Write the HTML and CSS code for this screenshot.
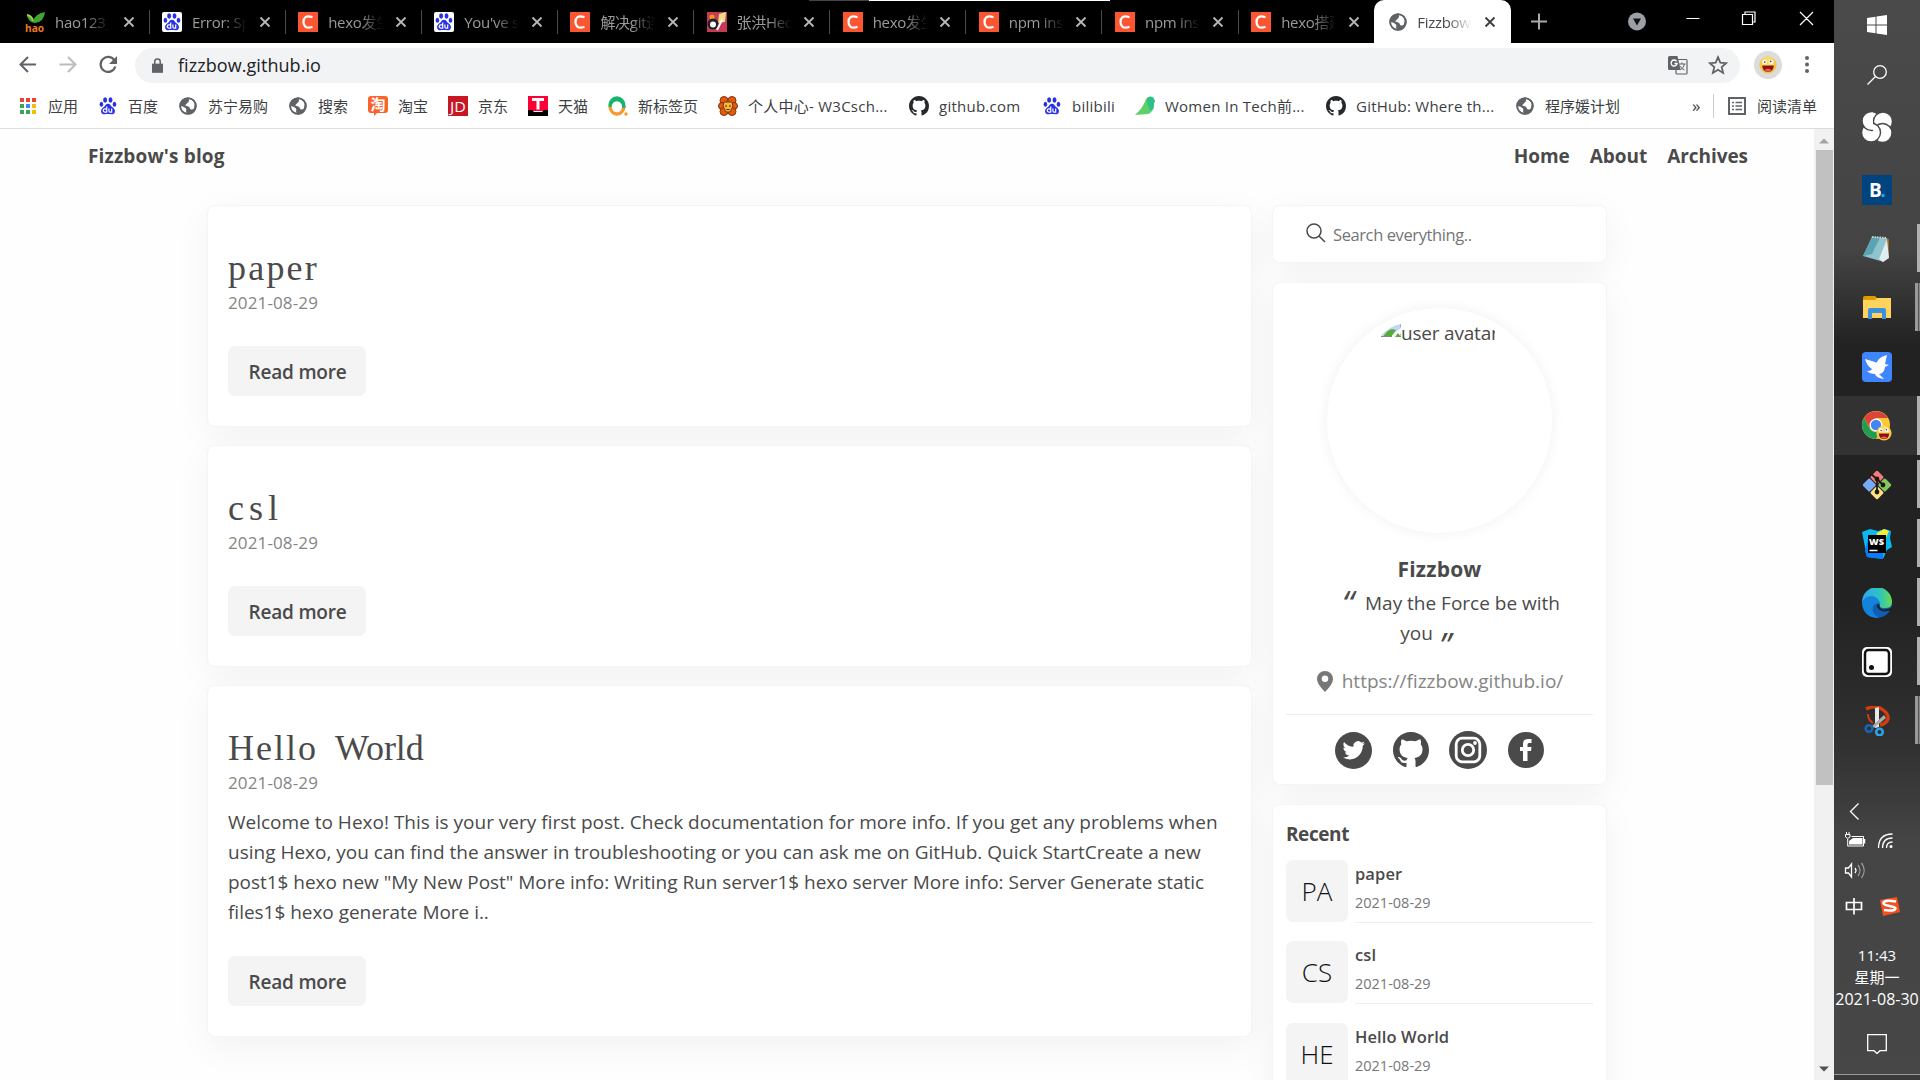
FILE: index.html
```html
<!DOCTYPE html>
<html lang="zh-CN">
<head>
<meta charset="utf-8">
<title>Fizzbow's blog</title>
<link rel="stylesheet" href="styles.css">
</head>
<body>
<svg class="defs" width="0" height="0">
  <symbol id="paw" viewBox="0 0 20 20"><g fill="#2932e1"><ellipse cx="6.8" cy="3.4" rx="2.2" ry="3"/><ellipse cx="12.8" cy="3.4" rx="2.2" ry="3"/><ellipse cx="2.7" cy="8" rx="2" ry="2.8"/><ellipse cx="17.2" cy="8" rx="2" ry="2.8"/><path d="M10 7.500c2.500 0 3 2.500 5 4s3.500 3.500 2.300 6c-1.300 2.600-4.300 1.500-7.300 1.500s-6 1.100-7.300-1.500c-1.200-2.500.3-4.500 2.300-6s2.500-4 5-4z"/></g><path d="M8.600 10.500v6.300H6.500a1.600 1.600 0 0 1 0-3.700h2M11 12.800v2.700q0 1.300 1.300 1.300h1.800v-4" fill="none" stroke="#fff" stroke-width="1.300"/></symbol>
  <symbol id="csdn" viewBox="0 0 20 20"><path fill="#fc5531" d="M0 0h20v20H0z"/><path d="M14.500 5.300C8 2.500 5.500 6 5.500 10s2.500 7.500 9 4.700" fill="none" stroke="#fff" stroke-width="2.300"/></symbol>
  <symbol id="globe" viewBox="0 0 20 20"><circle cx="10" cy="10" r="9.500" fill="#5f6368"/><path d="M11 2.300q5 .5 6.500 5.500l-1 5q-2 2-4 .5-.500-2.500-3.500-3.300-2 0-2-1 1.500-1 2.300-2.500 2.200-.5 1.700-4.200z" fill="#fff"/><path d="M2 10q3 .5 5.500 2.500 1 1 .5 2.500-.500 1 .5 2.700Q2 16.500 2 10z" fill="#fff"/><circle cx="10" cy="10" r="8.700" fill="none" stroke="#5f6368" stroke-width="2"/></symbol>
  <symbol id="github" viewBox="0 0 16 16"><path d="M8 0C3.580 0 0 3.580 0 8c0 3.540 2.290 6.530 5.470 7.590.4.070.55-.17.55-.38 0-.19-.01-.82-.01-1.490-2.010.37-2.530-.49-2.690-.94-.09-.23-.48-.94-.82-1.130-.28-.15-.68-.52-.01-.53.63-.01 1.080.58 1.230.82.72 1.210 1.870.87 2.330.66.07-.52.28-.87.51-1.070-1.780-.2-3.640-.89-3.640-3.950 0-.87.31-1.590.82-2.150-.08-.2-.36-1.020.08-2.120 0 0 .67-.21 2.200.82.64-.18 1.320-.27 2-.27s1.360.09 2 .27c1.530-1.040 2.200-.82 2.200-.82.44 1.100.16 1.920.08 2.120.51.56.82 1.270.82 2.150 0 3.070-1.870 3.750-3.650 3.950.29.25.54.73.54 1.480 0 1.070-.01 1.930-.01 2.200 0 .21.15.46.55.38A8.010 8.010 0 0 0 16 8c0-4.420-3.580-8-8-8z"/></symbol>
  <symbol id="x" viewBox="0 0 12 12"><path d="M1.500 1.500l9 9M10.500 1.500l-9 9" fill="none" stroke="currentColor" stroke-width="1.900"/></symbol>
  <symbol id="smile" viewBox="0 0 20 20"><circle cx="10" cy="10" r="9.500" fill="#f6c645"/><circle cx="10" cy="8" r="7" fill="#fbdc72"/><circle cx="6" cy="6.500" r="2.300" fill="#fff"/><circle cx="13.500" cy="6.500" r="2.300" fill="#fff"/><circle cx="6.400" cy="6.800" r=".9" fill="#333"/><circle cx="13" cy="6" r=".9" fill="#333"/><path d="M3.500 10.500h13q-.5 7-6.500 7t-6.500-7z" fill="#8c1010"/><path d="M6 15.500q4-2.500 8 0-4 3-8 0z" fill="#f0605a"/></symbol>
</svg>
<div class="desktop">
<main class="browser">
  <div class="tabstrip">
    <i class="topline"></i>
    <div class="tab first"><svg class="fav" viewBox="0 0 20 20"><path d="M2 3q5 0 6 6Q10 2 20 0q-1 10-10 11Q3 10 2 3z" fill="#3fa535"/><path d="M2 3q5 1 6 6" fill="none" stroke="#9bd04a" stroke-width="2"/><text x="0" y="19.500" font-size="11" font-weight="700" fill="#f07a1c" textLength="19" lengthAdjust="spacingAndGlyphs">hao</text></svg><span class="t">hao123_上</span><svg class="cl"><use href="#x"/></svg></div>
    <div class="tab"><svg class="fav box"><use href="#paw"/></svg><span class="t">Error: Spa</span><svg class="cl"><use href="#x"/></svg></div>
    <div class="tab"><svg class="fav"><use href="#csdn"/></svg><span class="t">hexo发生错</span><svg class="cl"><use href="#x"/></svg></div>
    <div class="tab"><svg class="fav box"><use href="#paw"/></svg><span class="t">You've suc</span><svg class="cl"><use href="#x"/></svg></div>
    <div class="tab"><svg class="fav"><use href="#csdn"/></svg><span class="t">解决git连接</span><svg class="cl"><use href="#x"/></svg></div>
    <div class="tab"><svg class="fav" viewBox="0 0 20 20"><path fill="#c73a55" d="M0 0h20v20H0z"/><path fill="#f1dc8a" d="M12 2l7-2-1 10-7 1z"/><circle cx="5" cy="5" r="2.500" fill="#f39a1d"/><circle cx="6" cy="12" r="5.500" fill="#222"/><circle cx="6" cy="12.500" r="3" fill="#fff"/><path d="M10 18l5-10" stroke="#fff" stroke-width="2"/></svg><span class="t">张洪Heo博</span><svg class="cl"><use href="#x"/></svg></div>
    <div class="tab"><svg class="fav"><use href="#csdn"/></svg><span class="t">hexo发生错</span><svg class="cl"><use href="#x"/></svg></div>
    <div class="tab"><svg class="fav"><use href="#csdn"/></svg><span class="t">npm insta</span><svg class="cl"><use href="#x"/></svg></div>
    <div class="tab"><svg class="fav"><use href="#csdn"/></svg><span class="t">npm insta</span><svg class="cl"><use href="#x"/></svg></div>
    <div class="tab last"><svg class="fav"><use href="#csdn"/></svg><span class="t">hexo搭建博</span><svg class="cl"><use href="#x"/></svg></div>
    <div class="tab active"><svg class="fav glb"><use href="#globe"/></svg><span class="t">Fizzbow's</span><svg class="cl"><use href="#x"/></svg></div>
    <div class="wctl">
      <svg viewBox="0 0 300 43" width="300" height="43" fill="none" stroke="#fff"><path d="M9 21.500h16M17 13.500v16" stroke="#aaa" stroke-width="2"/><circle cx="115" cy="21.500" r="9" fill="#9aa0a6" stroke="none"/><path d="M111 18.500h8l-4 7z" fill="#111" stroke="none"/><path d="M164.500 18.500h13M220.500 14.500h10v10h-10zM223 14v-2h10v10h-2M278 12l13 13M291 12l-13 13" stroke-width="1.200"/></svg>
    </div>
  </div>
  <div class="toolbar">
    <svg class="navbtns" viewBox="0 0 135 44" fill="none" stroke-width="2"><path d="M36 21.500H20.500M28 14l-7.500 7.500L28 29" stroke="#5f6368"/><path d="M59.500 21.500H75M68 14l7.500 7.500L68 29" stroke="#babcbe"/><path d="M114.500 17.500a7.500 7.500 0 1 0 .8 6" stroke="#5f6368" stroke-width="2.200"/><path d="M117 13v8h-8z" fill="#5f6368"/></svg>
    <div class="omni">
      <svg class="lock" viewBox="0 0 12 16"><path d="M0 6h12v10H0z" fill="#5f6368"/><path d="M3 7V4a3 3 0 0 1 6 0v3" fill="none" stroke="#5f6368" stroke-width="1.600"/></svg>
      <span class="url">fizzbow.github.io</span>
      <svg class="trans" viewBox="0 0 20 20"><rect x="8" y="4.500" width="11" height="14.500" rx="1" fill="#f1f3f4" stroke="#5f6368" stroke-width="1.200"/><path d="M10.500 9h7M14 7.500V9M12 15q4-2 4.500-6M11.500 10.500q2 3.500 5 4.500" stroke="#5f6368" fill="none"/><path d="M1.500 1h8l3 14h-11q-1.500 0-1.500-1.500V2.500Q0 1 1.500 1z" fill="#5f6368"/><path d="M8.500 6.200a3 3 0 1 0 .6 2.300H6.500" fill="none" stroke="#fff" stroke-width="1.400"/></svg>
      <svg class="star" viewBox="0 0 20 20"><path d="M10 2.200l2.300 5.500 5.900.5-4.500 3.900 1.400 5.800-5.100-3.100-5.100 3.100 1.400-5.800-4.500-3.900 5.900-.5z" fill="none" stroke="#5f6368" stroke-width="1.800"/></svg>
    </div>
    <div class="pav"><svg width="18" height="18"><use href="#smile"/></svg></div>
    <svg class="dots" viewBox="0 0 6 20" fill="#5f6368"><circle cx="3" cy="3" r="2"/><circle cx="3" cy="9.500" r="2"/><circle cx="3" cy="16" r="2"/></svg>
  </div>
  <div class="bookmarks">
    <div class="bm"><svg viewBox="0 0 20 20"><path fill="#ea4335" d="M2 2h4v4H2zM8 2h4v4H8zM14 2h4v4h-4z"/><path fill="#34a853" d="M2 8h4v4H2zM2 14h4v4H2z"/><path fill="#4285f4" d="M8 8h4v4H8z"/><path fill="#fbbc05" d="M14 8h4v4h-4zM14 14h4v4h-4z"/><path fill="#34a853" d="M8 14h4v4H8z"/></svg><span>应用</span></div>
    <div class="bm"><svg class="sm"><use href="#paw"/></svg><span>百度</span></div>
    <div class="bm"><svg class="sm"><use href="#globe"/></svg><span>苏宁易购</span></div>
    <div class="bm"><svg class="sm"><use href="#globe"/></svg><span>搜索</span></div>
    <div class="bm"><svg viewBox="0 0 20 20"><path d="M3 0h14q3 0 3 3v11q0 3-3 3H9l-3 3v-3H3q-3 0-3-3V3q0-3 3-3z" fill="#f8642c"/><text x="2.500" y="14" font-size="15" fill="#fff" font-weight="700">淘</text></svg><span>淘宝</span></div>
    <div class="bm"><svg viewBox="0 0 20 20"><path fill="#c81623" d="M0 0h20v20H0z"/><text x="2" y="15.500" font-size="14" fill="#fff" textLength="16" lengthAdjust="spacingAndGlyphs">JD</text></svg><span>京东</span></div>
    <div class="bm"><svg viewBox="0 0 20 20"><path fill="#ff0036" d="M0 0h20v15H0z"/><path fill="#000" d="M0 14h4l2 2h8l2-2h4v6H0z"/><path d="M4 3.500h12M10 3.500v10" stroke="#fff" stroke-width="3"/></svg><span>天猫</span></div>
    <div class="bm"><svg viewBox="0 0 20 20" fill="none" stroke-width="3.300"><path d="M2 11A6.900 7.500 0 0 1 15.800 11" stroke="#19b36b"/><path d="M15.800 10A6.900 7.500 0 0 1 2 11" stroke="#f79a2a"/><path d="M2 9.500A6.900 7.500 0 0 1 15.800 9.500V12" stroke="#19b36b"/><circle cx="18" cy="18" r="1.700" fill="#f79a2a" stroke="none"/></svg><span>新标签页</span></div>
    <div class="bm w3c"><svg viewBox="0 0 20 20"><g fill="#e8590c" stroke="#7a3510"><circle cx="6" cy="4.500" r="4"/><circle cx="14" cy="4.500" r="4"/><circle cx="4" cy="10" r="3.500"/><circle cx="16" cy="10" r="3.500"/><circle cx="6" cy="15.500" r="4"/><circle cx="14" cy="15.500" r="4"/></g><path d="M6 6h8l1 4-3 6H8l-3-6z" fill="#f6b73c" stroke="#7a3510"/><path d="M8 9v2M12 9v2M8.500 13.500h3" stroke="#4a2008"/></svg><span>个人中心- W3Csch...</span></div>
    <div class="bm"><svg fill="#24292e"><use href="#github"/></svg><span>github.com</span></div>
    <div class="bm"><svg class="sm"><use href="#paw"/></svg><span>bilibili</span></div>
    <div class="bm"><svg viewBox="0 0 20 20"><path d="M11 3q3-4 7-1.500L20 5l-1 2q1 8-6 11l-13 1Q8 12 11 3z" fill="#5fd068"/><path d="M12 2.500Q15-.5 18 1.500L20 5l-1 2q0 5-3 8-4-5-4-12z" fill="#2cc08a"/></svg><span>Women In Tech前...</span></div>
    <div class="bm"><svg fill="#24292e"><use href="#github"/></svg><span>GitHub: Where th...</span></div>
    <div class="bm"><svg class="sm"><use href="#globe"/></svg><span>程序媛计划</span></div>
    <div class="more">»</div>
    <div class="bm rl"><svg viewBox="0 0 20 20" fill="none" stroke="#5f6368"><path d="M2 2h16v16H2z" stroke-width="2"/><path d="M5 6.500h2M5 10h2M5 13.500h2M8.500 6.500h6.500M8.500 10h6.500M8.500 13.500h6.500" stroke-width="1.600"/></svg><span>阅读清单</span></div>
  </div>
  <div class="viewport">
    <div class="page">
      <header class="nav">
        <b>Fizzbow's blog</b>
        <nav><b>Home</b><b>About</b><b>Archives</b></nav>
      </header>
      <div class="cols">
        <section class="posts">
          <article class="card post">
            <h2 class="t-paper">paper</h2>
            <time>2021-08-29</time>
            <a class="btn"><span>Read more</span></a>
          </article>
          <article class="card post">
            <h2 class="t-csl">csl</h2>
            <time>2021-08-29</time>
            <a class="btn"><span>Read more</span></a>
          </article>
          <article class="card post long">
            <h2 class="t-hello">Hello <span>World</span></h2>
            <time>2021-08-29</time>
            <p><span>Welcome to Hexo! This is your very first post. Check documentation for more info. If you get any problems when</span>
            <span>using Hexo, you can find the answer in troubleshooting or you can ask me on GitHub. Quick StartCreate a new</span>
            <span class="tight">post1$ hexo new "My New Post" More info: Writing Run server1$ hexo server More info: Server Generate static</span>
            <span class="tight">files1$ hexo generate More i..</span></p>
            <a class="btn"><span>Read more</span></a>
          </article>
        </section>
        <aside class="side">
          <div class="card search"><svg viewBox="0 0 20 20" fill="none" stroke="#4a4a4a" stroke-width="1.500"><circle cx="8" cy="8" r="7"/><path d="M13 13l6 6"/></svg><span>Search everything..</span></div>
          <div class="card profile">
            <div class="avatar"><svg viewBox="0 0 20 13"><path d="M20 0v4L8 13H4l-4-1Q8 2 20 0z" fill="#c3d5f5"/><path d="M2 13q4-7 9-8l4 1-5 7z" fill="#57ab37"/><path d="M20 0v3M0 12.500h11M17 12.500h3v-3" stroke="#888" fill="none"/><path d="M14 13l3-4 3 4z" fill="#57ab37"/></svg><span>user avatar</span></div>
            <h3>Fizzbow</h3>
            <p class="quote"><i class="q open">“</i>May the Force be with<br><span class="you">you</span><i class="q close">”</i></p>
            <p class="loc"><svg viewBox="0 0 16 21"><path fill="#777" fill-rule="evenodd" d="M8 0a8 8 0 0 1 8 8q0 5-8 13Q0 13 0 8a8 8 0 0 1 8-8zm0 4.500a3.200 3.200 0 1 0 0 6.500 3.200 3.200 0 0 0 0-6.500z"/></svg><span>https://fizzbow.github.io/</span></p>
            <div class="social">
              <svg width="37" height="37" viewBox="0 0 37 37"><circle cx="18.500" cy="18.500" r="18.500"/><path transform="translate(7.500 7) scale(.94)" fill="#fff" d="M23.950 4.570a10 10 0 0 1-2.820.77 4.960 4.960 0 0 0 2.160-2.720c-.95.550-2 .95-3.130 1.180a4.920 4.920 0 0 0-8.380 4.480C7.690 8.090 4.070 6.130 1.640 3.160a4.820 4.820 0 0 0-.66 2.470c0 1.710.87 3.210 2.190 4.100a4.900 4.900 0 0 1-2.230-.62v.06a4.920 4.920 0 0 0 3.950 4.830 5 5 0 0 1-2.210.08 4.940 4.940 0 0 0 4.600 3.420A9.870 9.870 0 0 1 0 19.540a14 14 0 0 0 7.550 2.210c9.050 0 14-7.500 14-13.980 0-.21 0-.42-.02-.63a9.940 9.940 0 0 0 2.420-2.570z"/></svg>
              <svg width="36" height="36"><use href="#github"/></svg>
              <svg width="38" height="38" viewBox="0 0 38 38"><circle cx="19" cy="19" r="19"/><g fill="none" stroke="#fff" stroke-width="2.800"><rect x="7.200" y="7.200" width="23.600" height="23.600" rx="6"/><circle cx="19" cy="19" r="5.700"/></g><circle cx="26" cy="12" r="1.900" fill="#fff"/></svg>
              <svg width="36" height="36" viewBox="0 0 36 36"><circle cx="18" cy="18" r="18"/><path fill="#fff" d="M15 29V19h-3v-4h3v-3q0-5 5-5h3.500v4H21q-1.500 0-1.500 1.500V15h4l-.5 4h-3.500v10z"/></svg>
            </div>
          </div>
          <div class="card recent">
            <h4>Recent</h4>
            <div class="ri"><div class="th">PA</div><div class="rt"><b>paper</b><small>2021-08-29</small></div></div>
            <div class="ri"><div class="th">CS</div><div class="rt"><b>csl</b><small>2021-08-29</small></div></div>
            <div class="ri"><div class="th">HE</div><div class="rt"><b>Hello World</b><small>2021-08-29</small></div></div>
          </div>
        </aside>
      </div>
    </div>
    <div class="scroll"><svg viewBox="0 0 20 20"><path d="M5 14l5-5 5 5z" fill="#a3a3a3"/></svg><i class="thumb"></i><svg class="dn" viewBox="0 0 20 20"><path d="M5 7h10l-5 5z" fill="#505050"/></svg></div>
  </div>
</main>
<aside class="taskbar">
  <div class="slot s50"><svg width="20" height="20" viewBox="0 0 20 20" fill="#fff"><path d="M0 3l8.500-1.300v7.800H0zM9.500 1.500L20 0v9.500H9.500zM0 10.500h8.500v7.800L0 17zM9.500 10.500H20V20L9.500 18.500z"/></svg></div>
  <div class="slot s50"><svg width="20" height="20" viewBox="0 0 20 20" fill="none" stroke="#fff" stroke-width="1.300"><circle cx="13" cy="7" r="6.300"/><path d="M8.500 11.500L.5 19.500"/></svg></div>
  <div class="slot s60"><svg width="30" height="30" viewBox="0 0 30 30"><defs><clipPath id="lh"><path d="M0 0h11v30H0z"/></clipPath></defs><g fill="#fff" stroke="#474748" stroke-width="1.400"><circle cx="9.500" cy="9" r="9.500"/><circle cx="21" cy="9.500" r="9.500"/><circle cx="20.500" cy="21" r="9.500"/><circle cx="9" cy="20.500" r="9.500"/><circle cx="9.500" cy="9" r="9.500" clip-path="url(#lh)"/></g></svg></div>
  <div class="slot"><svg width="30" height="30" viewBox="0 0 30 30"><path fill="#00437e" d="M0 0h30v30H0z"/><text x="7" y="22" font-size="19" font-weight="700" fill="#fff">B</text><circle cx="21" cy="20.500" r="1.800" fill="#1aa7ec"/></svg></div>
  <div class="slot on"><svg width="30" height="30" viewBox="0 0 30 30"><path d="M24 4l3 1v18l-4 4z" fill="#9a6a1c"/><path d="M10 3l15 1-3 24L1 22z" fill="#8fc3cd"/><path d="M10 3l8 .5L10 20l-9 2z" fill="#5aa3b0"/><path d="M25 5l2 19-6 4-4-3z" fill="#dfeef0"/><path d="M10 3l15 1" stroke="#ccc" stroke-width="2" stroke-dasharray="1.500 1"/></svg></div>
  <div class="slot on dbl"><svg width="28" height="24" viewBox="0 0 28 24"><path d="M0 2q0-2 2-2h10l2 2v4H0z" fill="#e09b00"/><path d="M0 4h12l2-2h14v20H0z" fill="#ffd35c"/><path d="M5 23V14q0-2 2-2h14q2 0 2 2v9h-4v-6H9v6z" fill="#3b91dd"/></svg></div>
  <div class="slot"><svg width="30" height="30" viewBox="0 0 30 30"><rect width="30" height="30" rx="4" fill="#3f85ff"/><path d="M3 7l10 3q1 1 2 0 2-5 10-7l-2 9 4 1-4 2q-1 7-6 7l5 5q-8-1-9-5-5 0-8-3 4 0 5-2-5-3-7-10z" fill="#fff"/></svg></div>
  <div class="slot on full"><svg width="32" height="32" viewBox="0 0 32 32"><circle cx="15" cy="15" r="14" fill="#fcc934"/><path d="M2.900 8A14 14 0 0 1 27 8H15L9 18z" fill="#dc4437"/><path d="M2.900 8A14 14 0 0 0 15 29l6-10-6 3q-5 0-7-5z" fill="#1e9e52"/><circle cx="15" cy="15" r="6.500" fill="#fff"/><circle cx="15" cy="15" r="5.200" fill="#4285f4"/><svg x="15" y="15" width="16" height="16"><use href="#smile"/></svg></svg></div>
  <div class="slot on"><svg width="30" height="30" viewBox="0 0 30 30"><g transform="rotate(45 15 15)"><rect x="4.500" y="4.500" width="10" height="10" rx="1.500" fill="#f57b7b"/><rect x="15.500" y="4.500" width="10" height="10" rx="1.500" fill="#84c75a"/><rect x="15.500" y="15.500" width="10" height="10" rx="1.500" fill="#ffe082"/><rect x="4.500" y="15.500" width="10" height="10" rx="1.500" fill="#77abf7"/></g><g stroke="#1a1a1a" stroke-width="1.800" fill="#1a1a1a"><path d="M9 4l6 5v14M15 9l6 6" fill="none"/><circle cx="15" cy="9" r="1.500"/><circle cx="21" cy="15" r="1.500"/><circle cx="15" cy="22" r="1.500"/></g></svg></div>
  <div class="slot on"><svg width="30" height="30" viewBox="0 0 30 30"><path d="M0 3l8-3 8 2 7-2 6 2-1 7 2 9-5 3-4 9-16-2z" fill="#0cb8ee"/><path d="M3 22l3-12 15 14v6L5 28z" fill="#087cfa"/><path d="M15 4l7-4 5 2-3 7-10-1z" fill="#f5ea3c"/><path d="M6 6h18v18H6z" fill="#000"/><path d="M7.500 21.500h8" stroke="#fff" stroke-width="1.500"/><text x="7" y="15.500" font-size="9.500" font-weight="800" fill="#fff" textLength="15" lengthAdjust="spacingAndGlyphs">WS</text></svg></div>
  <div class="slot on"><svg width="30" height="30" viewBox="0 0 30 30"><defs><linearGradient id="eg"><stop offset="0" stop-color="#2aa8e8"/><stop offset=".6" stop-color="#2fc4c0"/><stop offset="1" stop-color="#69dc4e"/></linearGradient></defs><circle cx="15" cy="15" r="15" fill="#0c5fb4"/><path d="M0 14A15 15 0 0 1 30 14q0 6-7 6-7 0-5-3 0-6-7-7Q4 9 0 14z" fill="url(#eg)"/><path d="M0 14q3-6 10-6 7 1 8 8-4-2-7 2-2 8 6 12Q1 30 0 14z" fill="#1683da"/><path d="M17 16q-3 0-2 3 3 6 13 3l1 1-4-1q-7 1-8-6z" fill="#222"/><path d="M28.500 22q-6 2.500-10 .5l12-3z" fill="#222"/></svg></div>
  <div class="slot on"><svg width="30" height="30" viewBox="0 0 30 30"><rect width="30" height="30" rx="5" fill="#fff"/><rect x="3" y="3" width="24" height="24" rx="3.500" fill="#fff" stroke="#111" stroke-width="2.500"/><circle cx="9.500" cy="20.500" r="2.500" fill="#111"/></svg></div>
  <div class="slot on dbl"><svg width="26" height="30" viewBox="0 0 26 30" fill="none"><path d="M2 3q8-4 14-1 9 5 8 11-2 5-8 6" stroke="#d33c0d" stroke-width="3.500"/><path d="M4 8q0 6 5 9" stroke="#d33c0d" stroke-width="2"/><path d="M11 2l4-1v20l-4 1z" fill="#e8e8e8"/><path d="M20 9l2 3-12 10-2-2z" fill="#aaa"/><circle cx="5" cy="22.500" r="3.300" stroke="#1565b5" stroke-width="2.600"/><circle cx="15.500" cy="26" r="3.300" stroke="#2ba3ea" stroke-width="2.600"/></svg></div>
  <svg class="tray" width="86" height="130" viewBox="0 0 86 130" fill="none" stroke="#fff" stroke-width="1.300">
    <path d="M24.500 3.500l-8 8 8 8"/>
    <path d="M17.500 36.500h12v9.500h-16" stroke-width="1"/><path d="M19 38h9.500v6.500H15V41z" fill="#fff" stroke="none"/><path d="M30.500 39v4.500" stroke-width="1.500"/><path d="M11.500 34.500h4.500v2.500q-2.250 3-4.500 0zM12.500 34v-2M15 34v-2M13.700 39v7" stroke-width="1"/>
    <path d="M44.500 48q0-14 14-14M48.500 48q0-10 10-10M52.500 48q0-6 6-6"/><circle cx="57" cy="46.500" r="1.500" fill="#fff" stroke="none"/>
    <path d="M11.500 68h3l3-4v13l-3-4h-3zM21 68q2 2.500 0 5"/><path d="M24 65q4 5.500 0 11M27.500 63q5.500 7.500 0 15" stroke="#999"/>
    <path d="M12.500 102.500h15v7h-15zM20 98v16.500" stroke-width="1.700"/>
    <path d="M46 100l17-3 3 15-17 4z" fill="#f4511e" stroke="none"/><path d="M62 101.500q-12-2-12.500 1.500 0 2 6 3t6 2.500q-1 3-11.500 1.500" stroke-width="2.600"/>
  </svg>
  <div class="clock"><span>11:43</span><span>星期一</span><span class="date">2021-08-30</span></div>
  <svg class="note" width="20" height="20" viewBox="0 0 20 20" fill="none" stroke="#fff" stroke-width="1.300"><path d="M.7.7h18.600v16H13l-3 2.800-3-2.800H.7z"/></svg>
  <i class="peek"></i>
</aside>
</div>
</body>
</html>
```
FILE: styles.css
```css
* { box-sizing: border-box; }
body { margin: 0; font-family: "Open Sans", "Noto Sans", "Noto Sans CJK SC", sans-serif; color: #4a4a4a; }
p, h2, h3, h4 { margin: 0; }
.defs { position: absolute; }
.desktop { display: flex; width: 1920px; height: 1080px; overflow: hidden; background: #fefefe; }
.browser { width: 1834px; height: 1080px; display: flex; flex-direction: column; }

/* tab strip */
.tabstrip { position: relative; height: 43px; background: #000; display: flex; padding-left: 13px; }
.topline { position: absolute; left: 809px; top: 0; width: 301px; height: 1px; background: linear-gradient(90deg, #444 60px, #fff 60px); }
.tab { width: 136.150px; height: 43px; padding: 0 15px 0 12.500px; display: flex; align-items: center; position: relative; color: #9b9b9b; font-size: 15px; }
.tab.first { width: 136.500px; padding-left: 12px; }
.tab::after { content: ""; position: absolute; right: 0; top: 10px; width: 1px; height: 24px; background: #4c4c4c; }
.tab.last::after, .tab.active::after { display: none; }
.fav { width: 20px; height: 20px; flex: none; }
.fav.box { background: #fff; border-radius: 2px; padding: 1px; }
.fav.glb { width: 18px; height: 18px; margin-left: 3px; }
.t { width: 56px; margin-left: 10px; overflow: hidden; white-space: nowrap; letter-spacing: -.3px; -webkit-mask-image: linear-gradient(90deg, #000 55%, transparent 98%); mask-image: linear-gradient(90deg, #000 55%, transparent 98%); }
.cl { width: 12px; height: 12px; margin-left: auto; flex: none; color: #b5b5b5; }
.tab.active { width: 137px; margin-left: -1px; background: #fff; border-radius: 10px 10px 0 0; color: #45494d; }
.tab.active .cl { color: #3c4043; }
.wctl { margin-left: auto; }
.wctl svg { display: block; margin-right: 12px; }

/* address row */
.toolbar { height: 44px; background: #fff; display: flex; align-items: center; }
.navbtns { width: 135px; height: 44px; }
.omni { width: 1605px; height: 35px; border-radius: 18px; background: #f1f3f4; display: flex; align-items: center; padding: 0 12.500px 0 17px; }
.lock { width: 11px; height: 15px; }
.url { margin-left: 15px; font-size: 18px; letter-spacing: .06px; color: #202124; }
.trans { width: 20px; height: 20px; margin-left: auto; }
.star { width: 20px; height: 20px; margin-left: 20px; }
.pav { width: 28px; height: 28px; border-radius: 50%; background: #dcdcdc; margin-left: 14px; display: grid; place-items: center; }
.dots { width: 6px; height: 20px; margin-left: 22px; }

/* bookmarks */
.bookmarks { height: 42px; padding: 0 0 4px 18px; background: #fff; border-bottom: 1px solid #dadce0; display: grid; align-items: center; font-size: 15px; color: #3c4043;
  grid-template-columns: 80px 80px 110px 80px 80px 80px 80px 110px 191px 133px 93px 191px 189px 170px 28px 1fr; }
.bm { display: flex; align-items: center; gap: 10px; white-space: nowrap; }
.bm:nth-child(n+9):nth-child(-n+13) { letter-spacing: .25px; }
.bm svg { width: 20px; height: 20px; flex: none; }
.bm svg.sm { width: 18px; height: 18px; margin: 0 1px; }
.bm.rl { border-left: 1px solid #ccc; height: 24px; padding-left: 13px; }
.more { font-size: 17px; margin-left: 7px; line-height: 18px; }

/* page */
.viewport { flex: 1; display: flex; min-height: 0; }
.page { flex: 1; overflow: hidden; }
.nav { height: 56px; padding: 0 66px 2px 88px; display: flex; align-items: center; justify-content: space-between; font-size: 19px; letter-spacing: .15px; }
.nav nav { display: flex; gap: 20px; letter-spacing: -.05px; }
.cols { display: flex; gap: 20px; padding: 20px 0 0 207px; }
.posts { width: 1045px; display: flex; flex-direction: column; gap: 18px; }
.card { background: #fff; border: 1px solid #f5f5f5; border-radius: 8px; box-shadow: 0 10px 36px rgba(0, 0, 0, .05); }
.post { height: 222px; padding: 39px 20px 0; }
.post.long { height: 352px; }
.post h2 { font: 400 36px/46px "Liberation Serif", serif; }
.post .t-paper { letter-spacing: 2.2px; }
.post .t-csl { letter-spacing: 5px; }
.post .t-hello { letter-spacing: 2px; word-spacing: 6px; }
.t-hello span { letter-spacing: -.1px; }
.post time { display: block; font-size: 17px; line-height: 22px; margin-top: 1px; letter-spacing: .13px; color: #858585; }
.post p { margin-top: 13px; font-size: 19px; line-height: 30px; height: 120px; white-space: nowrap; }
.post p span { display: block; }
.post p .tight { letter-spacing: -.028px; }
.btn { display: flex; width: 138px; height: 50px; margin-top: 32px; padding: 2px 0 0 1px; align-items: center; justify-content: center; background: #f4f4f4; border-radius: 7px; font-size: 19px; font-weight: 600; letter-spacing: -.19px; }
.long .btn { margin-top: 29px; }
.side { width: 335px; display: flex; flex-direction: column; gap: 19px; }
.search { height: 58px; display: flex; align-items: center; padding: 1px 0 0 33px; font-size: 16.500px; letter-spacing: -.4px; color: #757575; }
.search svg { width: 20px; height: 20px; margin: -3px 7px 0 0; }
.profile { height: 503px; padding: 25px 13px 0; display: flex; flex-direction: column; align-items: center; }
.avatar { width: 225px; height: 225px; border-radius: 50%; box-shadow: 0 0 14px rgba(0, 0, 0, .06); display: flex; align-items: flex-start; padding: 12px 0 0 54px; font-size: 19px; line-height: 26px; letter-spacing: -.2px; overflow: hidden; }
.avatar svg { width: 20px; height: 13px; margin-top: 4px; flex: none; }
.avatar span { width: 94px; overflow: hidden; white-space: nowrap; }
.profile h3 { font-size: 21px; line-height: 30px; margin-top: 21px; letter-spacing: .2px; }
.quote { font-size: 19px; line-height: 30px; height: 60px; margin-top: 4px; text-align: center; position: relative; width: 100%; padding-left: 46px; white-space: nowrap; }
.you { margin-right: 92px; }
.q { position: absolute; font: italic 500 34px/40px "Open Sans", sans-serif; }
.q.open { left: 56px; top: -5px; }
.q.close { left: 153px; top: 37px; }
.loc { display: flex; align-items: center; gap: 9px; margin-top: 18px; height: 30px; padding-left: 1px; font-size: 19px; color: #858585; }
.loc svg { width: 16px; height: 21px; }
.social { width: 100%; margin-top: 18px; border-top: 1px solid #eee; padding-top: 16px; display: flex; justify-content: center; align-items: center; gap: 20.500px; fill: #4a4a4a; }
.recent { height: 320px; padding: 14px 13px; }
.recent h4 { font-size: 19px; line-height: 30px; margin-bottom: 11px; letter-spacing: -.42px; }
.ri { display: flex; gap: 7px; height: 62.500px; margin-bottom: 18.800px; }
.th { width: 62px; height: 62px; border-radius: 7px; background: #f4f4f4; display: grid; place-items: center; font-size: 26px; font-weight: 300; color: #111; }
.rt { flex: 1; border-bottom: 1px solid #eee; display: flex; flex-direction: column; }
.rt b { font-size: 16.500px; line-height: 28px; font-weight: 600; letter-spacing: .1px; }
.rt small { font-size: 14.500px; line-height: 29px; font-weight: 500; color: #777; }
.scroll { width: 20px; background: #f1f1f1; display: flex; flex-direction: column; }
.scroll svg { width: 20px; height: 21px; }
.thumb { height: 635px; margin: 0 1px 0 2px; background: #c1c1c1; }
.scroll .dn { margin-top: auto; }

/* taskbar */
.taskbar { width: 86px; height: 1080px; display: flex; flex-direction: column; align-items: center; color: #fff; background: linear-gradient(#4a4a4b 0, #444 250px, #222 345px, #222 600px, #303030 740px, #444 840px, #474748 1080px); }
.slot { width: 86px; height: 59px; flex: none; display: grid; place-items: center; position: relative; }
.s50 { height: 50px; }
.s60 { height: 60px; padding-bottom: 6px; }
.slot.on::after { content: ""; position: absolute; right: 0; top: 5px; width: 3px; height: 48px; background: #b0b0b0; }
.slot.dbl::after { width: 5px; background: linear-gradient(90deg, #999 3px, #555 3px, #555 4px, #888 4px); }
.slot.full { background: #323232; }
.slot.full::after { top: 0; height: 59px; }
.tray { margin-top: 50px; flex: none; }
.clock { display: flex; flex-direction: column; align-items: center; font-size: 15px; line-height: 22px; margin-top: 14px; }
.date { font-size: 16px; }
.note { margin-top: 24px; }
.peek { margin-top: auto; width: 86px; height: 6px; border-top: 1px solid #999; background: #3a3a3a; }
```
